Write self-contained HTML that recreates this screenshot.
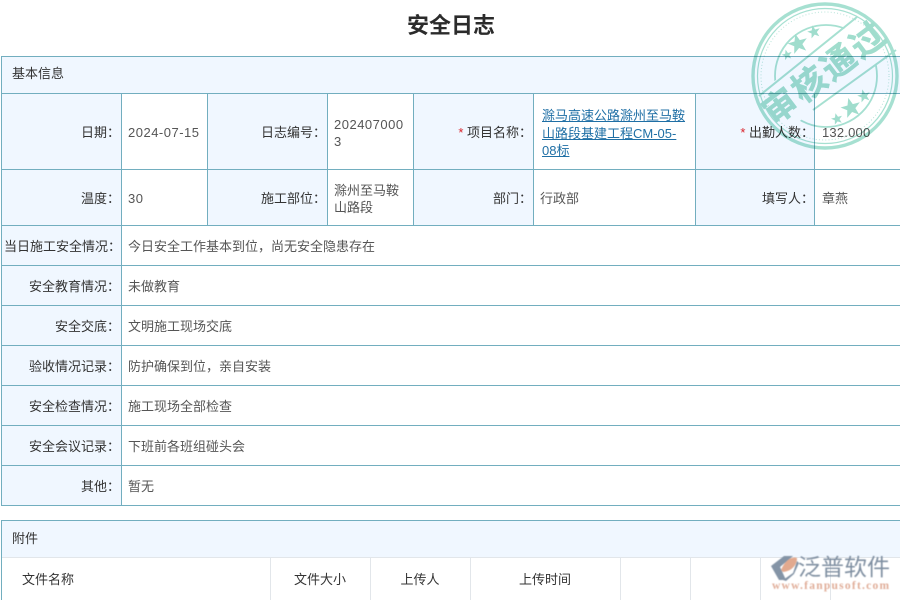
<!DOCTYPE html>
<html lang="zh-CN">
<head>
<meta charset="utf-8">
<title>安全日志</title>
<style>
html,body{margin:0;padding:0;background:#fff}
body{width:900px;height:600px;overflow:hidden;position:relative;font-family:"Liberation Sans","Noto Sans CJK SC",sans-serif;font-size:13px;color:#333}
.b{position:absolute;background:#f0f7ff}
.t{position:absolute;white-space:nowrap;line-height:18px}
.l{text-align:right;color:#333;left:2px;width:118px}
.v{color:#555}
.n{letter-spacing:.5px}
.r{color:#d9232b}
a{color:#1f6fa5;text-decoration:underline}
svg{position:absolute;left:0;top:0}
</style>
</head>
<body>
<div class="b" style="left:2px;top:57px;width:898px;height:36px"></div>
<div class="b" style="left:2px;top:94px;width:119px;height:411px"></div>
<div class="b" style="left:208px;top:94px;width:119px;height:131px"></div>
<div class="b" style="left:414px;top:94px;width:119px;height:131px"></div>
<div class="b" style="left:696px;top:94px;width:118px;height:131px"></div>
<div class="b" style="left:2px;top:521px;width:898px;height:36px"></div>

<svg width="900" height="600" viewBox="0 0 900 600" shape-rendering="crispEdges">
<g stroke="#72aebf" stroke-width="1" fill="none">
<path d="M1 56.5H900M1 93.5H900M1 169.5H900M1 225.5H900M1 265.5H900M1 305.5H900M1 345.5H900M1 385.5H900M1 425.5H900M1 465.5H900M1 505.5H900"/>
<path d="M1.5 56V506M121.5 93V506M207.5 93V226M327.5 93V226M413.5 93V226M533.5 93V226M695.5 93V226M814.5 93V226"/>
<path d="M1 520.5H900M1.5 520V600"/>
</g>
<g stroke="#e2e6ea" stroke-width="1" fill="none">
<path d="M2 557.5H900M270.5 558V600M370.5 558V600M470.5 558V600M620.5 558V600M690.5 558V600M760.5 558V600M830.5 558V600"/>
</g>
</svg>

<div class="t" style="left:0;width:902px;top:11px;text-align:center;font-size:22px;line-height:30px;font-weight:bold;color:#2b2b2b">安全日志</div>

<div class="t" style="left:12px;top:65px">基本信息</div>

<div class="t l" style="top:124px">日期：</div>
<div class="t v n" style="left:128px;top:124px">2024-07-15</div>
<div class="t l" style="left:208px;top:124px">日志编号：</div>
<div class="t v n" style="left:334px;top:116px;line-height:17px">202407000<br>3</div>
<div class="t l" style="left:414px;top:124px"><span class="r">* </span>项目名称：</div>
<div class="t" style="left:542px;top:107px;line-height:17.5px"><a>滁马高速公路滁州至马鞍</a><br><a>山路段基建工程CM-05-</a><br><a>08标</a></div>
<div class="t l" style="left:696px;width:118px;top:124px"><span class="r">* </span>出勤人数：</div>
<div class="t v" style="left:822px;top:124px;letter-spacing:.2px">132.000</div>

<div class="t l" style="top:190px">温度：</div>
<div class="t v n" style="left:128px;top:190px">30</div>
<div class="t l" style="left:208px;top:190px">施工部位：</div>
<div class="t v" style="left:334px;top:182px;line-height:17px">滁州至马鞍<br>山路段</div>
<div class="t l" style="left:414px;top:190px">部门：</div>
<div class="t v" style="left:540px;top:190px">行政部</div>
<div class="t l" style="left:696px;width:118px;top:190px">填写人：</div>
<div class="t v" style="left:822px;top:190px">章燕</div>

<div class="t l" style="top:238px;left:3px">当日施工安全情况：</div>
<div class="t v" style="left:128px;top:238px">今日安全工作基本到位，尚无安全隐患存在</div>
<div class="t l" style="top:278px">安全教育情况：</div>
<div class="t v" style="left:128px;top:278px">未做教育</div>
<div class="t l" style="top:318px">安全交底：</div>
<div class="t v" style="left:128px;top:318px">文明施工现场交底</div>
<div class="t l" style="top:358px">验收情况记录：</div>
<div class="t v" style="left:128px;top:358px">防护确保到位，亲自安装</div>
<div class="t l" style="top:398px">安全检查情况：</div>
<div class="t v" style="left:128px;top:398px">施工现场全部检查</div>
<div class="t l" style="top:438px">安全会议记录：</div>
<div class="t v" style="left:128px;top:438px">下班前各班组碰头会</div>
<div class="t l" style="top:478px">其他：</div>
<div class="t v" style="left:128px;top:478px">暂无</div>

<div class="t" style="left:12px;top:530px">附件</div>
<div class="t" style="left:22px;top:571px">文件名称</div>
<div class="t" style="left:270px;width:100px;text-align:center;top:571px">文件大小</div>
<div class="t" style="left:370px;width:100px;text-align:center;top:571px">上传人</div>
<div class="t" style="left:470px;width:150px;text-align:center;top:571px">上传时间</div>

<!-- stamp -->
<svg width="900" height="600" viewBox="0 0 900 600" style="mix-blend-mode:multiply">
<defs>
<mask id="band"><rect width="900" height="600" fill="#fff"/><rect x="-90" y="-23.5" width="180" height="47" fill="#000" transform="translate(831 68) rotate(-37)"/></mask>
<polygon id="st" points="0,-10 2.6,-3.1 9.5,-3.1 4,1.2 5.9,8.1 0,4 -5.9,8.1 -4,1.2 -9.5,-3.1 -2.6,-3.1"/>
</defs>
<g fill="none" stroke="#a6e0d1">
<circle cx="825" cy="76" r="72" stroke-width="3.4"/>
<circle cx="825" cy="76" r="67.5" stroke-width="1.2"/>
<circle cx="825" cy="76" r="64" stroke-width="1" stroke-dasharray="1 2.2" stroke="#b8e5da"/>
<circle cx="826" cy="76" r="51" stroke-width="1.8" mask="url(#band)"/>
</g>
<g stroke="#a6e0d1" stroke-width="2">
<line x1="759" y1="96" x2="857" y2="17"/>
<line x1="813" y1="110" x2="896" y2="50"/>
</g>
<g fill="#a0ddcd">
<use href="#st" transform="translate(798 44) scale(1.05) rotate(-15)"/>
<use href="#st" transform="translate(814 32) scale(.68) rotate(-15)"/>
<use href="#st" transform="translate(787 55) scale(.55) rotate(-15)"/>
<use href="#st" transform="translate(851 108) scale(1.05) rotate(-15)"/>
<use href="#st" transform="translate(864 96) scale(.68) rotate(-15)"/>
<use href="#st" transform="translate(837 119) scale(.6) rotate(-15)"/>
<text transform="translate(832 82) rotate(-37)" text-anchor="middle" font-size="34" font-weight="bold" letter-spacing="2.5" stroke="#a0ddcd" stroke-width=".5" font-family="'Noto Sans CJK SC',sans-serif">审核通过</text>
</g>
</svg>

<!-- logo -->
<svg width="900" height="600" viewBox="0 0 900 600" style="filter:blur(.4px)">
<path d="M784 556L771 566L779 580L786 580L780 567L793 556Z" fill="#8494a6"/>
<path d="M781 570C785 560 792 556 797 558C797 565 792 571 783 572Z" fill="#e2a98e"/>
<path d="M783 580L793 573L797 561L799 563L794 574L786 581Z" fill="#8494a6"/>
<text x="798" y="575" font-size="23" fill="#7f8fa1" font-family="'Noto Sans CJK SC',sans-serif">泛普软件</text>
<text x="772" y="589" font-size="11.5" font-weight="bold" fill="#e0ad98" letter-spacing="1.25" font-family="'Liberation Serif',serif">www.fanpusoft.com</text>
</svg>
</body>
</html>
